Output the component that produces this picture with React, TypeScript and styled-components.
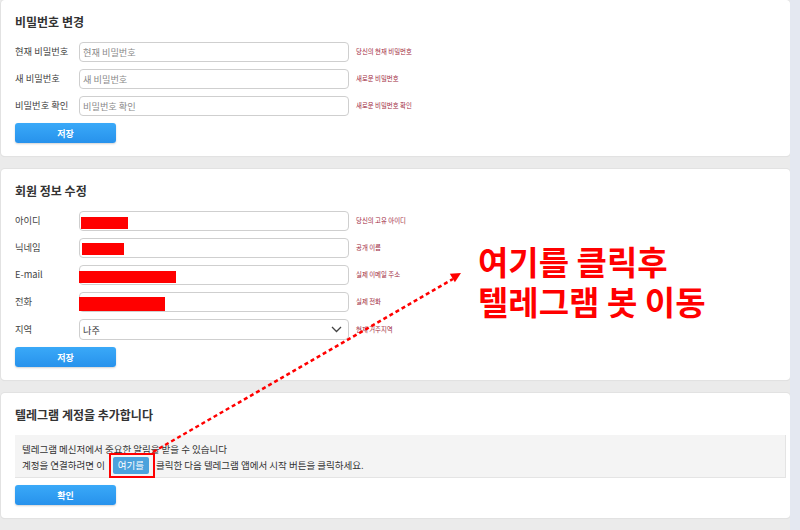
import styled, { createGlobalStyle } from 'styled-components';

const GlobalStyle = createGlobalStyle`
  body {
    margin: 0;
    background: #ebebeb;
    font-family: "Noto Sans CJK KR", "Noto Sans", sans-serif;
  }
`;

const Page = styled.div`
  position: relative;
  display: flex;
  width: 800px;
  height: 530px;
  overflow: hidden;
`;

const Main = styled.div`
  flex: 1;
  display: flex;
  flex-direction: column;
  gap: 13px;
  padding: 0 0 0 1px;
`;

const ScrollTrack = styled.div`
  width: 10px;
  background: #e4e8f1;
`;

const Card = styled.section`
  background: #fff;
  border-radius: 4px;
  box-shadow: 0 0 0 1px #e2e2e2, 0 1px 1px rgba(0, 0, 0, 0.06);
  padding: 14px 4px 13px 14px;
  display: flex;
  flex-direction: column;
  gap: 7px;
`;

const Title = styled.h3`
  margin: 0 0 5px 0;
  font-size: 12px;
  line-height: 16px;
  font-weight: 700;
  color: #333;
`;

const Row = styled.div`
  display: grid;
  grid-template-columns: 64px 270px auto;
  align-items: center;
`;

const Label = styled.span`
  font-size: 9.3px;
  color: #444;
  padding-bottom: 2px;
`;

const Help = styled.span`
  font-size: 6.4px;
  color: #a0283c;
  padding: 0 0 1px 7px;
`;

const TextInput = styled.input`
  box-sizing: border-box;
  height: 20px;
  width: 270px;
  margin: 0;
  border: 1px solid #cfcfcf;
  border-radius: 4px;
  padding: 0 3px;
  font-family: inherit;
  font-size: 9.2px;
  color: #333;
  background: #fff;
  outline: none;
  &::placeholder {
    color: #8a8a8a;
  }
`;

const FieldBox = styled.div<{ $tall?: boolean }>`
  box-sizing: border-box;
  height: ${(p) => (p.$tall ? '21px' : '20px')};
  border: 1px solid #cfcfcf;
  border-radius: 4px;
  padding: 0 3px;
  display: flex;
  align-items: center;
  justify-content: space-between;
  font-size: 9.2px;
  color: #333;
  background: #fff;
`;

const RedactedBox = styled.div`
  box-sizing: border-box;
  height: 20px;
  border: 1px solid #cfcfcf;
  border-radius: 4px;
  background: #fff;
  display: flex;
  align-items: flex-start;
`;

const Redaction = styled.span<{ $w: number; $left: number; $top: number; $h: number }>`
  display: block;
  width: ${(p) => p.$w}px;
  height: ${(p) => p.$h}px;
  margin-left: ${(p) => p.$left}px;
  margin-top: ${(p) => p.$top}px;
  background: #ff0000;
`;

const SaveButton = styled.button`
  width: 101px;
  height: 20px;
  border: none;
  border-radius: 3px;
  background: linear-gradient(#3aa9f8, #2792ec);
  box-shadow: 0 1px 2px rgba(0, 0, 0, 0.18);
  color: #fff;
  font-family: inherit;
  font-size: 9px;
  font-weight: 700;
  padding: 0;
`;

const InfoBox = styled.div`
  box-sizing: border-box;
  height: 43px;
  padding: 6px 8px 3px 7px;
  background: #f4f4f4;
  border-right: 1px solid #e4e4e4;
  border-bottom: 1px solid #e4e4e4;
  font-size: 9.5px;
  color: #333;
`;

const InfoLine = styled.div<{ $h: number }>`
  height: ${(p) => p.$h}px;
  display: flex;
  align-items: center;
  white-space: pre;
`;

const Highlight = styled.span`
  position: relative;
  display: inline-flex;
  margin: 0 7px 0 8px;
  &::after {
    content: '';
    position: absolute;
    left: -4px;
    right: -6px;
    top: -4px;
    bottom: -4px;
    border: 2px solid #ff0000;
  }
`;

const LinkButton = styled.span`
  display: inline-flex;
  align-items: center;
  justify-content: center;
  width: 36px;
  height: 17px;
  border-radius: 2px;
  background: #4ca2dc;
  color: #fff;
  font-size: 9.5px;
`;

const Callout = styled.div`
  position: absolute;
  left: 478px;
  top: 241px;
  color: #ff0000;
  font-size: 33px;
  font-weight: 700;
  line-height: 40px;
  white-space: pre;
`;

const Overlay = styled.svg`
  position: absolute;
  left: 0;
  top: 0;
  pointer-events: none;
`;

const passwordRows = [
  { label: '현재 비밀번호', placeholder: '현재 비밀번호', help: '당신의 현재 비밀번호' },
  { label: '새 비밀번호', placeholder: '새 비밀번호', help: '새로운 비밀번호' },
  { label: '비밀번호 확인', placeholder: '비밀번호 확인', help: '새로운 비밀번호 확인' },
];

const infoRows = [
  { label: '아이디', help: '당신의 고유 아이디', w: 47, left: 1, top: 5, h: 12 },
  { label: '닉네임', help: '공개 이름', w: 42, left: 2, top: 4, h: 12 },
  { label: 'E-mail', help: '실제 이메일 주소', w: 97, left: -1, top: 5, h: 12 },
  { label: '전화', help: '실제 전화', w: 86, left: -1, top: 4, h: 14 },
];

export default function App() {
  return (
    <Page>
      <GlobalStyle />
      <Main>
        <Card>
          <Title>비밀번호 변경</Title>
          {passwordRows.map((row) => (
            <Row key={row.label}>
              <Label>{row.label}</Label>
              <TextInput type="password" placeholder={row.placeholder} />
              <Help>{row.help}</Help>
            </Row>
          ))}
          <SaveButton>저장</SaveButton>
        </Card>

        <Card>
          <Title>회원 정보 수정</Title>
          {infoRows.map((row) => (
            <Row key={row.label}>
              <Label>{row.label}</Label>
              <RedactedBox>
                <Redaction $w={row.w} $left={row.left} $top={row.top} $h={row.h} />
              </RedactedBox>
              <Help>{row.help}</Help>
            </Row>
          ))}
          <Row>
            <Label>지역</Label>
            <FieldBox $tall>
              <span>나주</span>
              <svg width="11" height="7" viewBox="0 0 11 7" style={{ marginRight: 3 }}>
                <polyline points="1,1 5.5,5.5 10,1" fill="none" stroke="#444" strokeWidth="1.3" />
              </svg>
            </FieldBox>
            <Help>현재 거주지역</Help>
          </Row>
          <SaveButton>저장</SaveButton>
        </Card>

        <Card>
          <Title>텔레그램 계정을 추가합니다</Title>
          <InfoBox>
            <InfoLine $h={15}>텔레그램 메신저에서 중요한 알림을 받을 수 있습니다</InfoLine>
            <InfoLine $h={18}>
              계정을 연결하려면 이
              <Highlight>
                <LinkButton>여기를</LinkButton>
              </Highlight>
              클릭한 다음 텔레그램 앱에서 시작 버튼을 클릭하세요.
            </InfoLine>
          </InfoBox>
          <SaveButton>확인</SaveButton>
        </Card>
      </Main>
      <ScrollTrack />

      <Overlay width="800" height="530" viewBox="0 0 800 530">
        <line x1="153" y1="452" x2="453" y2="279" stroke="#ff0000" strokeWidth="2.5" strokeDasharray="4 3" />
        <polygon points="461,273 454.9,282.3 449.8,273.7" fill="#ff0000" />
      </Overlay>
      <Callout>{'여기를 클릭후\n텔레그램 봇 이동'}</Callout>
    </Page>
  );
}
